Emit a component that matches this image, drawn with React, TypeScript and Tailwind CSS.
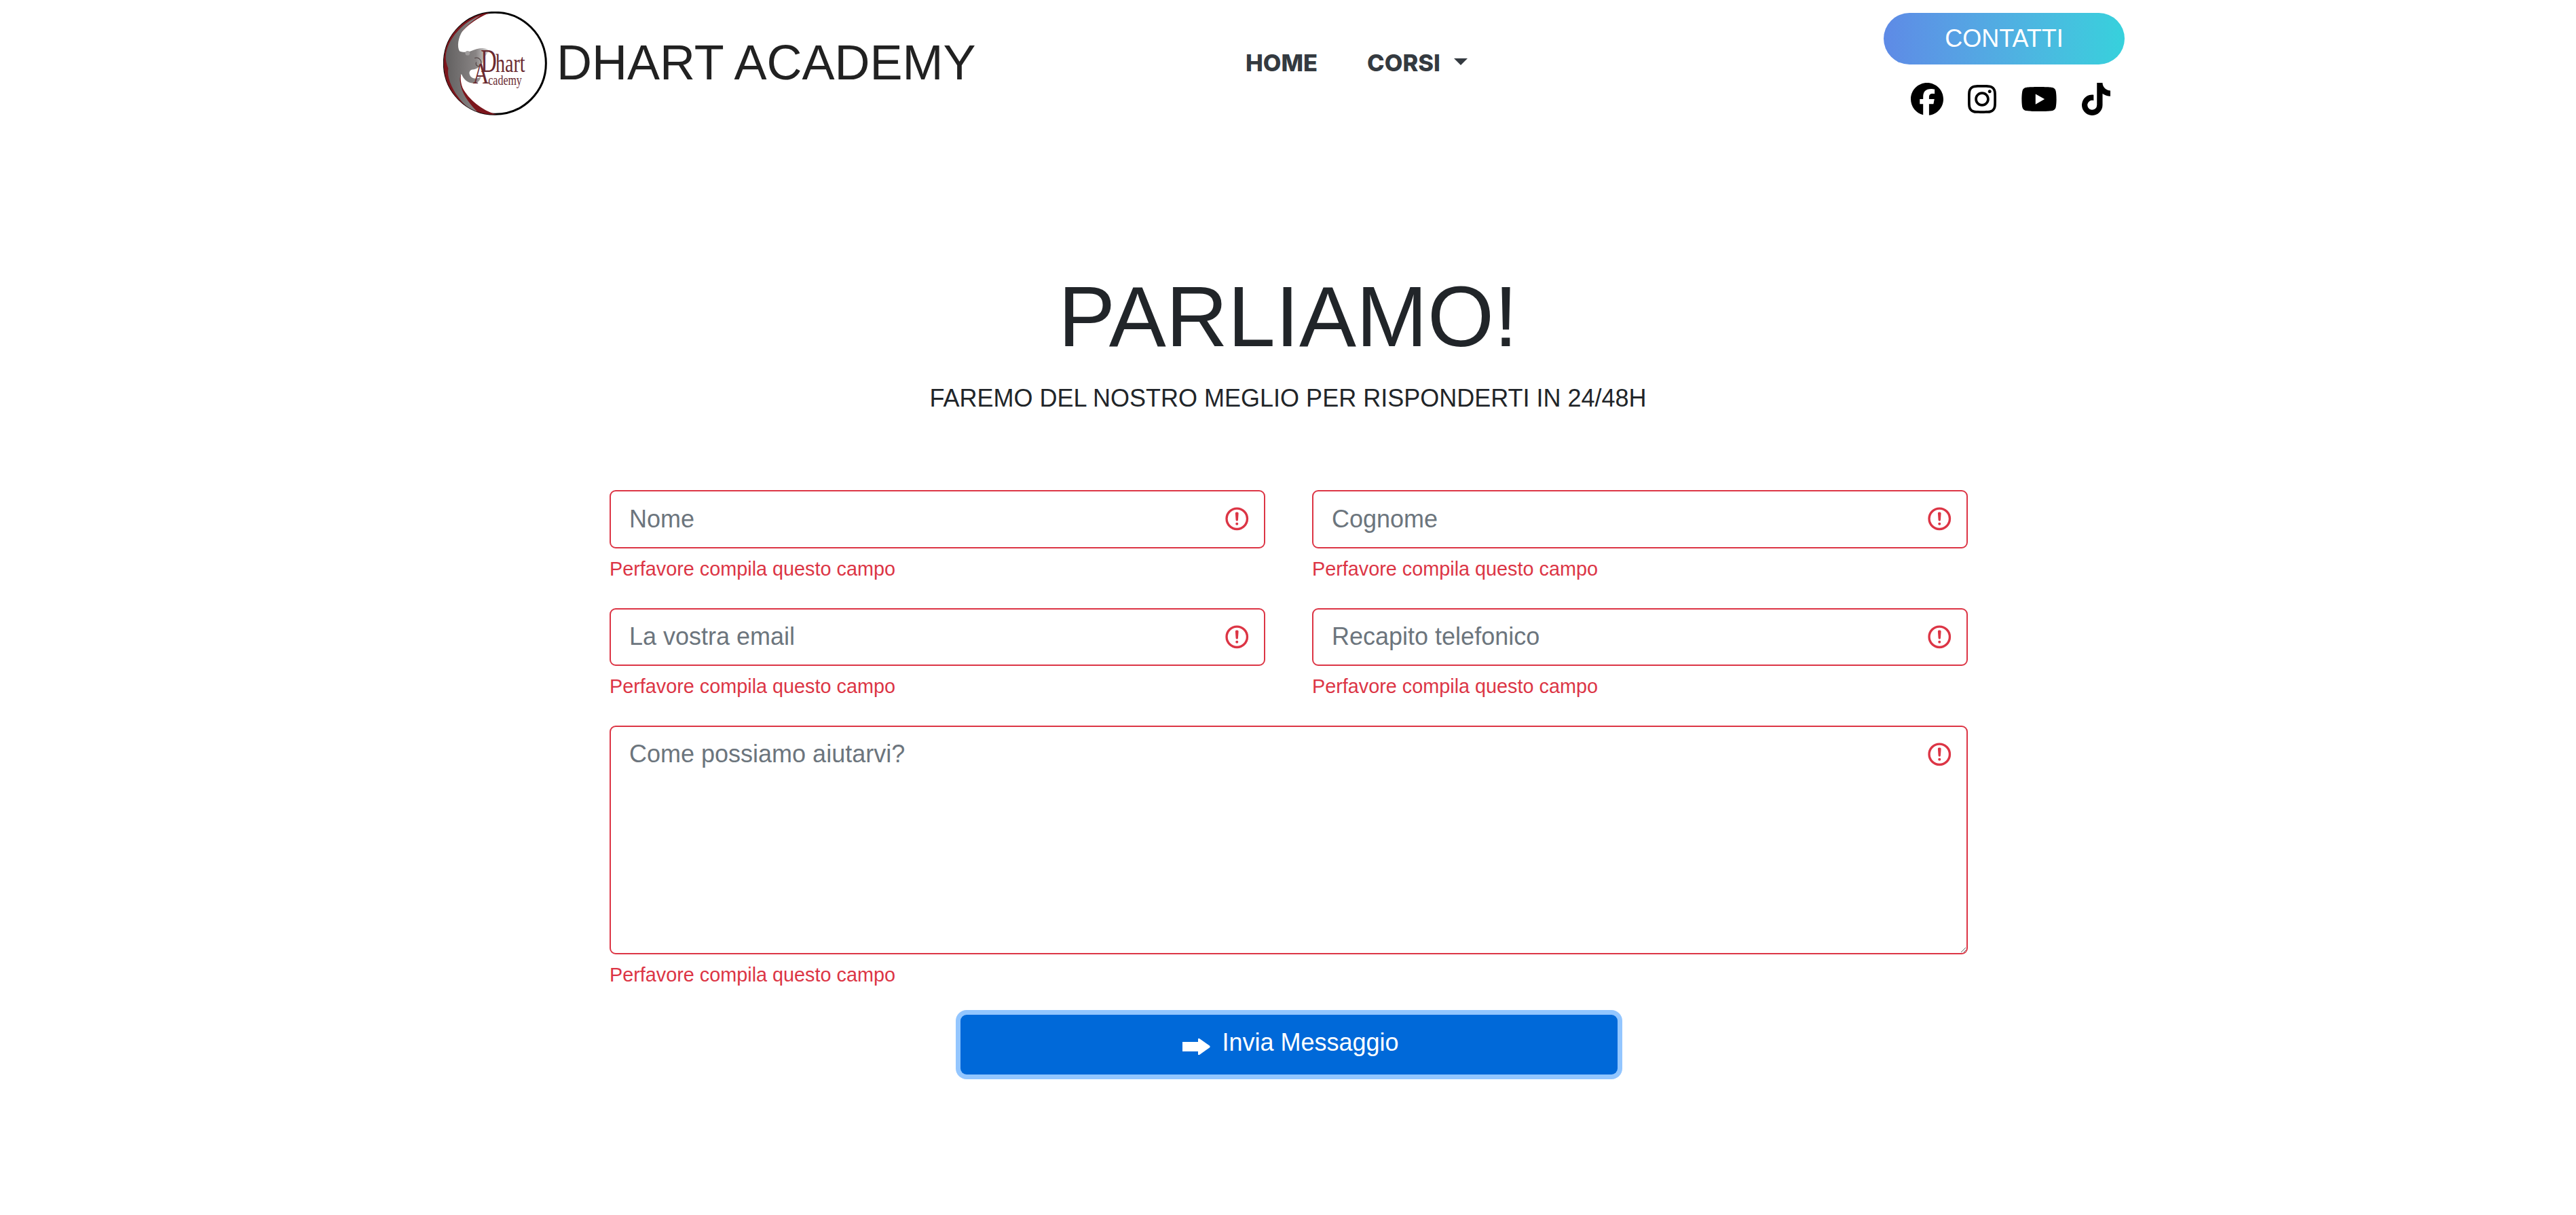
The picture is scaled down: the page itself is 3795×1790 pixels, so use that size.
import { FaFacebook, FaInstagram, FaYoutube, FaTiktok } from "react-icons/fa6";

const errorText = "Perfavore compila questo campo";

function ErrorIcon() {
  return (
    <svg
      viewBox="0 0 12 12"
      className="absolute right-[22px] top-[22px] h-[40.5px] w-[40.5px]"
      fill="none"
      stroke="#dc3545"
    >
      <circle cx="6" cy="6" r="4.5" />
      <path strokeLinejoin="round" d="M5.8 3.6h.4L6 6.5z" />
      <circle cx="6" cy="8.2" r="0.6" fill="#dc3545" stroke="none" />
    </svg>
  );
}

function InputField({ placeholder }: { placeholder: string }) {
  return (
    <div className="mb-9">
      <div className="relative">
        <input
          placeholder={placeholder}
          className="block h-[85.5px] w-full rounded-[9px] border-2 border-[#dc3545] bg-white px-[27px] text-[36px] text-[#495057] outline-none placeholder:text-[#6c757d]"
        />
        <ErrorIcon />
      </div>
      <div className="mt-[9px] text-[28.8px] leading-[43.2px] text-[#dc3545]">{errorText}</div>
    </div>
  );
}

function Logo() {
  return (
    <svg viewBox="40 35 457 457" className="h-[153px] w-[153px] shrink-0">
      <defs>
        <linearGradient id="octopus" x1="40" y1="0" x2="245" y2="0" gradientUnits="userSpaceOnUse">
          <stop offset="0" stopColor="#5f5d5d" />
          <stop offset="0.7" stopColor="#888484" />
          <stop offset="1" stopColor="#e2dfdf" />
        </linearGradient>
        <clipPath id="disc">
          <circle cx="268" cy="263" r="227" />
        </clipPath>
      </defs>
      <circle cx="268" cy="263" r="224" fill="#fff" stroke="#000" strokeWidth="9" />
      <g clipPath="url(#disc)">
        <path
          d="M245 40C170 45 95 95 60 170 40 215 38 270 48 320 65 395 115 460 190 480 215 487 250 490 275 488 210 470 150 420 125 370 115 345 115 320 120 300L75 290C60 260 70 230 80 190 100 130 170 70 245 40z"
          fill="#7c161c"
        />
        <path
          d="M205 52C140 75 85 130 62 185 50 215 45 245 62 285 55 320 75 370 105 410 130 445 160 470 195 482 160 445 130 410 118 365 112 340 112 320 120 310 130 335 150 352 175 350 195 348 205 335 205 320 195 330 175 335 160 320 150 305 155 290 175 290 195 285 215 270 215 250 215 235 235 225 240 205 225 190 190 195 160 210 145 215 125 215 112 210 100 190 105 150 125 120 145 95 175 70 205 52z"
          fill="url(#octopus)"
        />
        <circle cx="147" cy="218" r="10" fill="#a09d9d" />
        <path d="M178 240C195 232 212 250 205 268 198 282 180 275 185 258" fill="none" stroke="#4a3a3a" strokeWidth="3" />
      </g>
      <text fill="#6a2a30" fontFamily="'Liberation Serif', serif">
        <tspan x="205" y="300" fontSize="145" textLength="70" lengthAdjust="spacingAndGlyphs">D</tspan>
        <tspan x="270" y="300" fontSize="112" textLength="130" lengthAdjust="spacingAndGlyphs">hart</tspan>
        <tspan x="170" y="352" fontSize="130" textLength="72" lengthAdjust="spacingAndGlyphs">A</tspan>
        <tspan x="238" y="358" fontSize="62" textLength="148" lengthAdjust="spacingAndGlyphs">cademy</tspan>
      </text>
    </svg>
  );
}

export default function App() {
  return (
    <div className="min-h-[1790px] bg-white font-['Liberation_Sans',Arial,sans-serif] text-[#212529]">
      <header className="flex h-[190px] items-start pl-[653px]">
        <div className="mt-[17px] flex w-[1120px] items-center">
          <Logo />
          <span className="mb-[3px] ml-[14px] text-[72px] leading-none text-[#212121]">DHART ACADEMY</span>
        </div>
        <nav className="mt-[70px] flex w-[1002px] items-center pl-[62px] font-['Inter',sans-serif] text-[34.5px] font-extrabold leading-[46px] text-[#343a40]">
          <span>HOME</span>
          <span className="ml-[73px]">CORSI</span>
          <span className="mb-[4px] ml-[20px] h-0 w-0 border-x-[10.8px] border-t-[10.8px] border-x-transparent border-t-[#343a40]" />
        </nav>
        <div className="mt-[19px] flex flex-col items-end">
          <button className="h-[76px] w-[355px] rounded-full bg-gradient-to-r from-[#5e8ae6] to-[#36d1dc] text-[36px] text-white">
            CONTATTI
          </button>
          <div className="mt-[27px] flex items-center gap-[36px] pr-[21px] text-black">
            <FaFacebook className="h-[48px] w-[48px]" />
            <FaInstagram className="h-[48px] w-[42px]" />
            <FaYoutube className="h-[48px] w-[54px]" />
            <FaTiktok className="h-[48px] w-[42px]" />
          </div>
        </div>
      </header>

      <main>
        <h1 className="mt-[201px] text-center text-[126px] font-normal leading-[151px]">PARLIAMO!</h1>
        <p className="mt-[18px] text-center text-[36px] leading-[54px]">
          FAREMO DEL NOSTRO MEGLIO PER RISPONDERTI IN 24/48H
        </p>

        <form className="ml-[898px] mt-[108px] w-[2001px]">
          <div className="grid grid-cols-2 gap-x-[69px]">
            <InputField placeholder="Nome" />
            <InputField placeholder="Cognome" />
            <InputField placeholder="La vostra email" />
            <InputField placeholder="Recapito telefonico" />
          </div>
          <div className="mb-9">
            <div className="relative">
              <textarea
                placeholder="Come possiamo aiutarvi?"
                className="block h-[337px] w-full rounded-[9px] border-2 border-[#dc3545] bg-white px-[27px] py-[13px] text-[36px] leading-[54px] text-[#495057] outline-none placeholder:text-[#6c757d]"
              />
              <ErrorIcon />
            </div>
            <div className="mt-[9px] text-[28.8px] leading-[43.2px] text-[#dc3545]">{errorText}</div>
          </div>
          <div className="flex justify-center">
            <button
              type="button"
              className="flex h-[88px] w-[968px] items-center justify-center rounded-[9px] bg-[#0069d9] pb-[6px] pl-[6px] text-[36px] text-white ring-[7px] ring-[#93c6ff]"
            >
              <svg viewBox="0 0 41 24" className="mr-[17px] mt-[12px] h-[24px] w-[41px]" fill="#fff">
                <path d="M0 5h23V0h2l15.5 11v2L25 24h-2v-5H0z" />
              </svg>
              Invia Messaggio
            </button>
          </div>
        </form>
      </main>
    </div>
  );
}
